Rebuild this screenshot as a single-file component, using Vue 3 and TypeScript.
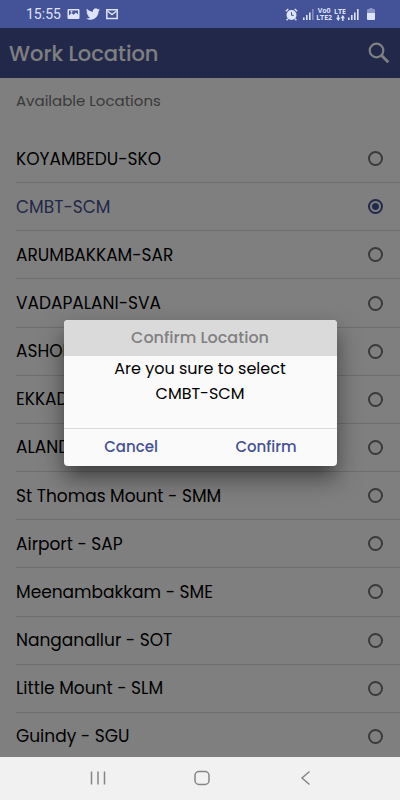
<script setup lang="ts">
import { ref } from 'vue'

interface Location {
  id: string
  label: string
}

const locations: Location[] = [
  { id: 'sko', label: 'KOYAMBEDU-SKO' },
  { id: 'scm', label: 'CMBT-SCM' },
  { id: 'sar', label: 'ARUMBAKKAM-SAR' },
  { id: 'sva', label: 'VADAPALANI-SVA' },
  { id: 'san', label: 'ASHOK' },
  { id: 'sek', label: 'EKKADU' },
  { id: 'sal', label: 'ALANDUR' },
  { id: 'smm', label: 'St Thomas Mount - SMM' },
  { id: 'sap', label: 'Airport - SAP' },
  { id: 'sme', label: 'Meenambakkam - SME' },
  { id: 'sot', label: 'Nanganallur - SOT' },
  { id: 'slm', label: 'Little Mount - SLM' },
  { id: 'sgu', label: 'Guindy - SGU' },
]

const selected = ref<string>('scm')
const dialogOpen = ref<boolean>(true)

function labelOf(id: string): string {
  return locations.find((l) => l.id === id)?.label ?? ''
}
</script>

<template>
  <div class="phone">
    <div class="status">
      <div class="status-group">
        <span class="clock">15:55</span>
        <svg width="13" height="12" viewBox="0 0 13 12">
          <path fill="currentColor" fill-rule="evenodd" d="M1.500 1h10a1 1 0 0 1 1 1v8a1 1 0 0 1-1 1h-10a1 1 0 0 1-1-1V2a1 1 0 0 1 1-1zM2 7.500 4.500 5l2 1.800L9 4.600l2 2V2.500H2z" />
          <circle cx="4.500" cy="3.800" r="1" fill="currentColor" />
        </svg>
        <svg width="14" height="14" viewBox="0 0 24 24">
          <path fill="currentColor" d="M23.950 4.570a10 10 0 0 1-2.820.770 4.960 4.960 0 0 0 2.160-2.720c-.950.550-2 .950-3.130 1.180a4.920 4.920 0 0 0-8.380 4.480C7.690 8.090 4.070 6.130 1.640 3.160a4.820 4.820 0 0 0-.670 2.480c0 1.710.870 3.210 2.190 4.100a4.900 4.900 0 0 1-2.230-.620v.060a4.920 4.920 0 0 0 3.950 4.830 5 5 0 0 1-2.210.080 4.940 4.940 0 0 0 4.600 3.420A9.870 9.870 0 0 1 0 19.540a13.990 13.990 0 0 0 7.550 2.210c9.050 0 14-7.500 14-13.980 0-.210 0-.420-.020-.630a9.940 9.940 0 0 0 2.460-2.550z" />
        </svg>
        <svg width="12" height="12" viewBox="0 0 12 12">
          <path fill="none" stroke="currentColor" stroke-width="1.500" d="M.8 1.800h10.400v8.700H.8z" />
          <path fill="none" stroke="currentColor" stroke-width="1.400" d="m1.500 3 4.500 3.600L10.500 3" />
        </svg>
      </div>
      <div class="status-group right">
        <svg class="alarm" width="13" height="13" viewBox="0 0 13 13">
          <path fill="none" stroke="currentColor" stroke-width="1.400" d="M.8 3.200 3.300 1M12.200 3.200 9.700 1M3 10.700 1.600 12.200M10 10.700l1.400 1.500" />
          <circle cx="6.500" cy="7" r="5" fill="currentColor" />
          <path class="clock-hands" d="M6.500 4v3.300h2.300" />
        </svg>
        <svg width="11" height="11" viewBox="0 0 11 11">
          <path fill="currentColor" d="M0 8.500h1.600V11H0zM3 6h1.600v5H3zM6 3.500h1.600V11H6z" />
          <path fill="currentColor" opacity=".4" d="M9 0h1.600v11H9z" />
        </svg>
        <span class="net"><span>Vo0</span><span>LTE2</span></span>
        <span class="net">
          <span>LTE</span>
          <svg width="9" height="6" viewBox="0 0 9 6">
            <path fill="currentColor" d="M1.500 0h1.400v2.800h1.500L2.200 6 0 2.800h1.500zM6.100 6h1.400V3.200H9L6.800 0 4.600 3.200h1.500z" />
          </svg>
        </span>
        <svg width="11" height="11" viewBox="0 0 11 11">
          <path fill="currentColor" d="M0 8.500h1.600V11H0zM3 6h1.600v5H3zM6 3.500h1.600V11H6zM9 0h1.600v11H9z" />
        </svg>
        <svg class="battery" width="8" height="12" viewBox="0 0 8 12">
          <path fill="currentColor" opacity=".45" d="M2.500 0h3v1H7a1 1 0 0 1 1 1v3H0V2a1 1 0 0 1 1-1h1.500z" />
          <path fill="currentColor" d="M0 5h8v6a1 1 0 0 1-1 1H1a1 1 0 0 1-1-1z" />
        </svg>
      </div>
    </div>

    <div class="screen">
      <header class="toolbar">
        <h1>Work Location</h1>
        <button class="search" type="button" aria-label="Search">
          <svg width="22" height="22" viewBox="0 0 22 22">
            <circle cx="8.500" cy="8.500" r="6.800" fill="none" stroke="currentColor" stroke-width="2.200" />
            <path fill="none" stroke="currentColor" stroke-width="2.800" d="m13.300 13.300 7 7" />
          </svg>
        </button>
      </header>

      <main class="content">
        <h2>Available Locations</h2>
        <ul class="list">
          <li v-for="loc in locations" :key="loc.id">
            <label :class="{ active: loc.id === selected }">
              <span>{{ loc.label }}</span>
              <input v-model="selected" type="radio" name="location" :value="loc.id" @change="dialogOpen = true" />
            </label>
          </li>
        </ul>
      </main>

      <div v-if="dialogOpen" class="backdrop">
        <div class="dialog" role="dialog" aria-labelledby="dialog-title">
          <h3 id="dialog-title">Confirm Location</h3>
          <p>Are you sure to select<br />{{ labelOf(selected) }}</p>
          <div class="actions">
            <button type="button" @click="dialogOpen = false">Cancel</button>
            <button type="button" @click="dialogOpen = false">Confirm</button>
          </div>
        </div>
      </div>
    </div>

    <nav class="navbar">
      <button type="button" aria-label="Recent apps">
        <svg width="16" height="16" viewBox="0 0 16 16">
          <path d="M1.500 1.500v13M8 1.500v13M14.500 1.500v13" />
        </svg>
      </button>
      <button type="button" aria-label="Home">
        <svg width="16" height="16" viewBox="0 0 16 16">
          <rect x="1" y="1.500" width="14" height="13" rx="4" />
        </svg>
      </button>
      <button type="button" aria-label="Back">
        <svg width="16" height="16" viewBox="0 0 16 16">
          <path d="M12.500 1.500 5 8l7.500 6.500" />
        </svg>
      </button>
    </nav>
  </div>
</template>

<style>
body {
  margin: 0;
}
</style>

<style scoped>
.phone {
  display: flex;
  flex-direction: column;
  height: 100vh;
  overflow: hidden;
  font-family: Poppins, Inter, sans-serif;
  color: #000;
}

button {
  padding: 0;
  border: 0;
  background: none;
  font: inherit;
  color: inherit;
  cursor: pointer;
}

svg {
  display: block;
}

.status {
  display: flex;
  flex: none;
  justify-content: space-between;
  align-items: center;
  height: 28px;
  padding: 0 25px 0 26px;
  background: #445298;
  color: #dfe4fb;
}

.status-group {
  display: flex;
  align-items: center;
  gap: 6px;
}

.status-group.right {
  gap: 2px;
}

.clock {
  font-family: Roboto, sans-serif;
  font-size: 14px;
}

.clock-hands {
  fill: none;
  stroke: #445298;
  stroke-width: 1;
}

.alarm {
  margin-right: 3px;
}

.battery {
  margin-left: 6px;
}

.net {
  display: flex;
  flex-direction: column;
  align-items: center;
  font-family: "Open Sans", sans-serif;
  font-size: 7px;
  font-weight: 700;
  line-height: 7px;
}

.screen {
  position: relative;
  display: flex;
  flex: 1;
  flex-direction: column;
  min-height: 0;
  background: #fff;
}

.toolbar {
  display: flex;
  flex: none;
  justify-content: space-between;
  align-items: center;
  height: 50px;
  padding: 0 10px 0 9px;
  background: #445193;
  color: #fff;
}

h1,
h2,
h3,
p,
ul {
  margin: 0;
  padding: 0;
}

h1 {
  font-size: 21px;
  font-weight: 500;
}

.content {
  display: flex;
  flex: 1;
  flex-direction: column;
  min-height: 0;
  overflow: hidden;
}

h2 {
  flex: none;
  padding: 11px 16px 22px;
  font-size: 15px;
  font-weight: 400;
  line-height: 24px;
  color: #757575;
}

.list {
  display: grid;
  flex: 1;
  grid-auto-rows: 1fr;
  margin-bottom: -4px;
  padding-left: 16px;
  list-style: none;
}

.list li {
  display: grid;
  min-height: 47px;
  border-bottom: 1px solid #dcdcdc;
}

label {
  display: flex;
  justify-content: space-between;
  align-items: center;
  padding-right: 17px;
  font-size: 17px;
}

.active {
  color: #445193;
}

input {
  flex: none;
  appearance: none;
  width: 15px;
  height: 15px;
  margin: 0;
  border: 2px solid #757575;
  border-radius: 50%;
}

input:checked {
  border-color: #445193;
  background: radial-gradient(circle, #445193 3px, transparent 4px);
}

.backdrop {
  position: absolute;
  inset: 0;
  display: flex;
  justify-content: center;
  align-items: center;
  background: rgba(0, 0, 0, 0.5);
}

.dialog {
  width: calc(100% - 48px);
  max-width: 273px;
  overflow: hidden;
  border-radius: 4px;
  background: #fafafa;
  box-shadow: 0 11px 15px -7px rgba(0, 0, 0, 0.3), 0 12px 24px 2px rgba(0, 0, 0, 0.35);
  text-align: center;
}

h3 {
  background: #dadada;
  color: #808080;
  font-size: 16px;
  font-weight: 500;
  line-height: 36px;
}

p {
  padding-bottom: 22px;
  font-size: 16px;
  line-height: 25px;
}

.actions {
  display: grid;
  grid-template-columns: 1fr 1fr;
  padding-right: 3px;
  border-top: 1px solid #dcdcdc;
  color: #445193;
}

.actions button {
  height: 37px;
  padding-bottom: 2px;
  font-size: 15px;
  font-weight: 500;
}

.navbar {
  display: flex;
  flex: none;
  justify-content: space-evenly;
  align-items: center;
  box-sizing: border-box;
  height: 43px;
  padding: 0 0 2px 3px;
  background: #f1f1f1;
  color: #858585;
}

.navbar svg {
  fill: none;
  stroke: currentColor;
  stroke-width: 1.500;
}
</style>
